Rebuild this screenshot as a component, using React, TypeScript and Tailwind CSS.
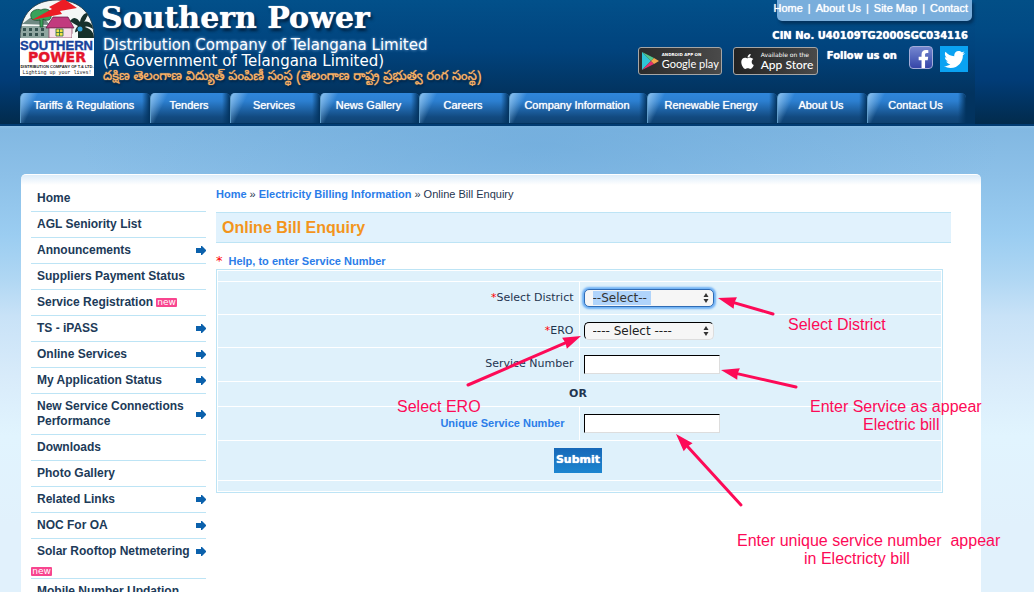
import React from "react";
import { FaApple, FaFacebookF, FaTwitter } from "react-icons/fa";

const tabs = [
  "Tariffs & Regulations",
  "Tenders",
  "Services",
  "News Gallery",
  "Careers",
  "Company Information",
  "Renewable Energy",
  "About Us",
  "Contact Us",
];

type Item = { label: string; arrow?: boolean; badge?: "inline" | "below" };

const menu: Item[] = [
  { label: "Home" },
  { label: "AGL Seniority List" },
  { label: "Announcements", arrow: true },
  { label: "Suppliers Payment Status" },
  { label: "Service Registration", badge: "inline" },
  { label: "TS - iPASS", arrow: true },
  { label: "Online Services", arrow: true },
  { label: "My Application Status", arrow: true },
  { label: "New Service Connections Performance", arrow: true },
  { label: "Downloads" },
  { label: "Photo Gallery" },
  { label: "Related Links", arrow: true },
  { label: "NOC For OA", arrow: true },
  { label: "Solar Rooftop Netmetering", arrow: true, badge: "below" },
  { label: "Mobile Number Updation" },
];

function Logo() {
  return (
    <svg className="shrink-0" width="75" height="76" viewBox="0 0 75 76" role="img" aria-label="Southern Power">
      <defs>
        <clipPath id="dome">
          <path d="M0 38 C0 14 14 0 37 0 C60 0 74 14 74 38 Z" />
        </clipPath>
      </defs>
      <g clipPath="url(#dome)">
        <rect width="75" height="38" fill="#f4f7f6" />
        <path d="M0 26 H30 V38 H0 Z" fill="#8fa6a0" />
        <path d="M2 24 L10 18 H24 L30 25 Z" fill="#6f8983" />
        <path d="M3 28h3v3h-3z M9 28h3v3h-3z M15 28h3v3h-3z M21 28h3v3h-3z M3 33h3v3h-3z M9 33h3v3h-3z M15 33h3v3h-3z M21 33h3v3h-3z" fill="#35524f" />
        <path d="M11 17 C9 11 17 8 21 10 C26 7 34 11 31 17 C31 21 25 21 23 19 V27 H20 V20 C16 21 11 20 11 17 Z" fill="#3aa35a" stroke="#17452a" strokeWidth="0.7" />
        <path d="M26 28 L33 17 H48 L54 28 Z" fill="#c23a7e" stroke="#5b1b3c" strokeWidth="0.7" />
        <rect x="29" y="28" width="23" height="10" fill="#f7dfe9" stroke="#7e3658" strokeWidth="0.7" />
        <path d="M36 29h7v7h-7z" fill="#f3e34a" stroke="#2b6d45" strokeWidth="0.8" />
        <path d="M39.500 29v7 M36 32.500h7" stroke="#2b6d45" strokeWidth="0.8" />
        <path d="M50 21 C54 15 58 19 60 22 C61 16 66 11 69 14 C66 17 66 20 64 22 C69 20 73 25 73 29 C70 27 67 26 65 27 C72 29 74 34 74 38 H56 C54 34 55 28 58 26 C55 24 52 23 50 21 Z" fill="#17312c" />
        <circle cx="60" cy="29" r="2.500" fill="#35a3dc" />
        <path d="M52 34 l6 -3 v7 h-6 z" fill="#f5f9f7" />
      </g>
      <path d="M0 38 C0 14 14 0 37 0 C60 0 74 14 74 38" fill="none" stroke="#20343b" strokeWidth="0.8" />
      <path d="M44 -1 L57 8 L40 11 L42 14 L12 20 L32 9 L29 7 Z" fill="#ec1c24" />
      <rect y="38" width="74" height="38" fill="#fff" />
      <text x="0" y="50" fontFamily="Liberation Sans, Arial, sans-serif" fontWeight="700" fontSize="13" fill="#17439b" stroke="#17439b" strokeWidth="0.4">SOUTHERN</text>
      <text x="37" y="62" textAnchor="middle" fontFamily="DejaVu Sans, Verdana, sans-serif" fontWeight="700" fontSize="14" fill="#e4152b" stroke="#e4152b" strokeWidth="0.4">POWER</text>
      <text x="37" y="68" textAnchor="middle" fontFamily="Liberation Sans, Arial, sans-serif" fontWeight="700" fontSize="4" fill="#111">DISTRIBUTION COMPANY OF T.&amp; LTD.</text>
      <text x="37" y="74" textAnchor="middle" fontFamily="Liberation Mono, monospace" fontSize="5" fill="#222">Lighting up your lives!</text>
    </svg>
  );
}

function NewBadge() {
  return (
    <span className="inline-flex h-[9px] w-[21px] items-center justify-center rounded-[1px] bg-[#f8458f] pb-px font-['DejaVu_Sans',sans-serif] text-[9px] leading-[9px] font-normal text-white">
      new
    </span>
  );
}

function MenuArrow() {
  return (
    <svg className="shrink-0" width="10" height="9" viewBox="0 0 10 9" aria-hidden="true">
      <path d="M0 2h5V0h1l4 4v1l-4 4h-1V7H0z" fill="#0b61ac" />
    </svg>
  );
}

function PlayBadge() {
  return (
    <a href="#play" className="flex h-[28px] w-[84px] items-center gap-[3px] rounded-[3px] border border-[#a6a6a6] bg-linear-to-r from-[#2b2b2b] to-[#4a4a4a] pl-[3px] text-white">
      <svg width="17" height="20" viewBox="0 0 17 20" aria-hidden="true">
        <path d="M0 1 L9 10 L0 19 Z" fill="#2fc3d6" />
        <path d="M0 1 L12 7 L9 10 Z" fill="#54c68a" />
        <path d="M0 19 L12 13 L9 10 Z" fill="#e6306c" />
        <path d="M12 7 L17 10 L12 13 L9 10 Z" fill="#f5a74b" />
      </svg>
      <span className="flex flex-col">
        <span className="font-['DejaVu_Sans',sans-serif] text-[4px] leading-[5px] font-bold whitespace-nowrap">ANDROID APP ON</span>
        <span className="font-['Lato',sans-serif] text-[11px] leading-[13px] whitespace-nowrap">Google play</span>
      </span>
    </a>
  );
}

function AppStoreBadge() {
  return (
    <a href="#appstore" className="flex h-[28px] w-[85px] items-center gap-[5px] rounded-[3px] border border-[#a6a6a6] bg-linear-to-r from-[#222] to-[#4a4a4a] pl-[5px] text-white">
      <FaApple size={17} className="shrink-0" />
      <span className="flex flex-col">
        <span className="font-['DejaVu_Sans',sans-serif] text-[6px] leading-[7px] whitespace-nowrap">Available on the</span>
        <span className="font-['Lato',sans-serif] text-[12px] leading-[13px] font-medium whitespace-nowrap">App Store</span>
      </span>
    </a>
  );
}

function Header() {
  return (
    <header className="border-b-2 border-[#023c72] bg-[linear-gradient(#024f87_0,#014a84_30px,#013c77_80px,#022b4c_124px)] font-['Liberation_Sans',Arial,sans-serif]">
      <div className="ml-5 max-w-[955px] bg-[linear-gradient(#02508a_0,#01437d_50px,#02335f_93px,#02335f_124px)] pr-[3px]">
        <div className="flex h-[93px] justify-between">
          <div className="flex gap-[6px]">
            <Logo />
            <div className="flex flex-col whitespace-nowrap text-white">
              <h1 className="h-[37px] font-['DejaVu_Serif',serif] text-[30px] leading-[35px] font-bold [text-shadow:0_0_1px_#fff,2px_3px_3px_#00203f]">Southern Power</h1>
              <p className="pl-[2px] font-['DejaVu_Sans',sans-serif] text-[15px] leading-[16px] [text-shadow:0_0_3px_#9cc8f5]">Distribution Company of Telangana Limited</p>
              <p className="pl-[2px] font-['DejaVu_Sans',sans-serif] text-[15px] leading-[17px]">(A Government of Telangana Limited)</p>
              <p className="pl-[2px] font-['Noto_Sans_Telugu','Noto_Sans',sans-serif] text-[13px] leading-[16px] text-[#fbb163] [text-shadow:0_0_1px_#fbb163,1px_2px_2px_#00203f]">దక్షిణ తెలంగాణ విద్యుత్ పంపిణీ సంస్థ (తెలంగాణ రాష్ట్ర ప్రభుత్వ రంగ సంస్థ)</p>
            </div>
          </div>
          <div className="flex flex-col items-end text-white">
            <nav className="flex h-[21px] w-[195px] justify-end gap-[5px] rounded-b-[5px] bg-[#79aedc] pr-1 text-[11px] leading-[16px] whitespace-nowrap shadow-[2px_3px_3px_#02335f] [text-shadow:0_0_1px_#fff]">
              <a href="#home">Home</a>
              <span>|</span>
              <a href="#about">About Us</a>
              <span>|</span>
              <a href="#map">Site Map</a>
              <span>|</span>
              <a href="#contact">Contact</a>
            </nav>
            <p className="mt-2 pr-1 font-['DejaVu_Sans',sans-serif] text-[10px] leading-[14px] font-bold [text-shadow:0_0_1px_#fff]">CIN No. U40109TG2000SGC034116</p>
            <div className="mt-[3px] flex items-start pr-1">
              <div className="mt-px flex gap-[11px]">
                <PlayBadge />
                <AppStoreBadge />
              </div>
              <span className="mr-[12px] ml-[9px] pt-[3px] font-['DejaVu_Sans',sans-serif] text-[10px] leading-[14px] font-bold whitespace-nowrap [text-shadow:0_0_1px_#fff]">Follow us on</span>
              <a href="#facebook" aria-label="Facebook" className="flex h-[23px] w-[24px] items-end justify-center rounded-[4px] border border-[#a3acd8] bg-linear-to-b from-[#7586cf] to-[#3645a8] pl-[5px]">
                <FaFacebookF size={18} />
              </a>
              <a href="#twitter" aria-label="Twitter" className="ml-[7px] flex h-[26px] w-[28px] items-center justify-center bg-[#0aa2f2]">
                <FaTwitter size={21} />
              </a>
            </div>
          </div>
        </div>
        <nav className="grid h-[31px] grid-cols-[130fr_80fr_90fr_99fr_90fr_138fr_130fr_90fr_99fr] pr-[6px] pb-px">
          {tabs.map((t) => (
            <a
              key={t}
              href="#tab"
              className="block rounded-t-[5px] border-l border-[#5f9cc9] bg-[linear-gradient(115deg,#8fc3ee_0,#8fc3ee00_16px),linear-gradient(to_left,#02335f_0,#02335f00_8px),linear-gradient(#2f86da_0,#2c7fd0_8px,#124a80_24px,#0f4373)] pr-[3px] text-center text-[11px] leading-[24px] whitespace-nowrap text-white [text-shadow:0_0_1px_#fff]"
            >
              {t}
            </a>
          ))}
        </nav>
      </div>
    </header>
  );
}

function Sidebar() {
  return (
    <aside className="w-[175px] shrink-0 text-[12px] leading-[15px] font-bold text-[#203a58]">
      <ul>
        {menu.map((m) => (
          <li key={m.label} className="border-b border-[#bde4f5]">
            <a href="#menu" className="block pt-[5px]">
              <span className={m.badge === "below" ? "flex items-center justify-between" : "flex items-center justify-between pb-[5px]"}>
                <span className={m.badge === "inline" ? "flex items-center gap-[3px] pl-[6px]" : "pl-[6px]"}>
                  {m.label}
                  {m.badge === "inline" && <NewBadge />}
                </span>
                {m.arrow && <MenuArrow />}
              </span>
              {m.badge === "below" && (
                <span className="flex pt-2 pb-[2px]">
                  <NewBadge />
                </span>
              )}
            </a>
          </li>
        ))}
      </ul>
    </aside>
  );
}

function Chevrons() {
  return (
    <svg className="pointer-events-none absolute top-[4px] right-[5px]" width="6" height="10" viewBox="0 0 6 10" aria-hidden="true">
      <path d="M3 0l2.500 4h-5z M3 10l2.500-4h-5z" fill="#333" />
    </svg>
  );
}

const labelCell = "border-r border-b border-white pr-[5px] text-right";
const fieldCell = "border-b border-white pl-1";
const textBox =
  "block h-[19px] w-[136px] border-t border-r border-b border-l border-t-black border-r-[#ddd] border-b-[#ddd] border-l-black bg-white px-1 outline-none";

function EnquiryForm() {
  return (
    <form className="mr-2 border border-[#bde4f5] p-px font-['DejaVu_Sans',sans-serif] text-[11px] text-[#1f3550]">
      <table className="w-full table-fixed border-separate border-spacing-0 bg-[#dff1fb]">
        <tbody>
          <tr className="h-[11px]">
            <td className="w-1/2 border-b border-white" />
            <td className="w-1/2 border-b border-white" />
          </tr>
          <tr className="h-[33px]">
            <td className={labelCell}>
              <label htmlFor="district"><span className="text-[#f00]">*</span>Select District</label>
            </td>
            <td className={fieldCell}>
              <div className="relative w-[130px]">
                <select id="district" className="block h-[18px] w-full appearance-none rounded-[5px] border border-[#2f6cb5] bg-[#f6f6f6] bg-[linear-gradient(#b0d4fb,#b0d4fb)] bg-[length:58px_14px] bg-[position:8px_1px] bg-no-repeat pl-2 text-[12px] leading-[16px] text-[#333] shadow-[0_0_2px_2px_#6fb1f5] outline-none">
                  <option>--Select--</option>
                </select>
                <Chevrons />
              </div>
            </td>
          </tr>
          <tr className="h-[33px]">
            <td className={labelCell}>
              <label htmlFor="ero"><span className="text-[#f00]">*</span>ERO</label>
            </td>
            <td className={fieldCell}>
              <div className="relative w-[130px]">
                <select id="ero" className="block h-[18px] w-full appearance-none rounded-[5px] border border-t-black border-r-[#ddd] border-b-[#ddd] border-l-black bg-[#f6f6f6] pl-2 text-[12px] leading-[16px] text-[#222] outline-none">
                  <option>---- Select ----</option>
                </select>
                <Chevrons />
              </div>
            </td>
          </tr>
          <tr className="h-[34px]">
            <td className={labelCell}><label htmlFor="service">Service Number</label></td>
            <td className={fieldCell}><input id="service" type="text" className={textBox} /></td>
          </tr>
          <tr className="h-[25px]">
            <td colSpan={2} className="border-b border-white pr-[3px] text-center font-bold">OR</td>
          </tr>
          <tr className="h-[34px]">
            <td className="border-r border-b border-white pr-[14px] text-right font-['Liberation_Sans',Arial,sans-serif] font-bold text-[#2b7de9]">
              <label htmlFor="unique">Unique Service Number</label>
            </td>
            <td className={fieldCell}><input id="unique" type="text" className={textBox} /></td>
          </tr>
          <tr className="h-[40px]">
            <td colSpan={2} className="border-b border-white pr-[3px] text-center">
              <button type="button" className="h-[25px] w-[48px] bg-linear-to-b from-[#1668b8] to-[#1d86d0] text-[11px] font-bold text-white [text-shadow:0_0_1px_#fff]">Submit</button>
            </td>
          </tr>
          <tr className="h-[10px]"><td colSpan={2} /></tr>
        </tbody>
      </table>
    </form>
  );
}

const arrows = [
  { tip: [718, 298], tail: [773, 314] },
  { tip: [581, 336], tail: [468, 385] },
  { tip: [721, 370], tail: [796, 387] },
  { tip: [676, 434], tail: [741, 505] },
];

const note = "absolute text-center text-[16px] leading-[18px] whitespace-pre text-[#fd0a57]";

function Annotations() {
  return (
    <div className="pointer-events-none absolute top-0 left-0 font-['Liberation_Sans',Helvetica,sans-serif]">
      <svg width="1034" height="592" viewBox="0 0 1034 592" aria-hidden="true">
        {arrows.map(({ tip, tail }) => {
          const dx = tail[0] - tip[0];
          const dy = tail[1] - tip[1];
          const angle = (Math.atan2(dy, dx) * 180) / Math.PI;
          return (
            <g key={tip.join()} transform={`translate(${tip[0]} ${tip[1]}) rotate(${angle})`} fill="#fd0a57">
              <line x1="12" x2={Math.hypot(dx, dy)} stroke="#fd0a57" strokeWidth="3" strokeLinecap="round" />
              <path d="M0 0 L18 -6 L17 0 L18 6 Z" />
            </g>
          );
        })}
      </svg>
      <p className={`${note} top-[316px] left-[788px]`}>Select District</p>
      <p className={`${note} top-[398px] left-[397px]`}>Select ERO</p>
      <p className={`${note} top-[398px] left-[810px]`}>{"Enter Service as appear"}</p>
      <p className={`${note} top-[416px] left-[863px]`}>{"Electric bill"}</p>
      <p className={`${note} top-[532px] left-[737px]`}>{"Enter unique service number  appear"}</p>
      <p className={`${note} top-[550px] left-[804px]`}>{"in Electricty bill"}</p>
    </div>
  );
}

export default function App() {
  return (
    <div className="relative flex h-screen flex-col overflow-hidden bg-[#e1f1fc] font-['Liberation_Sans',Arial,sans-serif]">
      <Header />
      <div className="flex-1 bg-[radial-gradient(ellipse_460px_140px_at_540px_20px,#6aa8da99,#6aa8da00),linear-gradient(#8dc0e6_0,#82b8e2_3px,#8cc0e8_50px,#9bcdf1_110px,#aed6f3_150px,#c8e2f7_190px,#d8ebfa_250px,#e1f4fe_310px,#e1f1fc_400px)] pt-12">
        <div className="ml-[21px] flex max-w-[960px] rounded-t-[5px] border-t border-white bg-[linear-gradient(#dcecf9_0,#fff_10px)] pt-[11px] pl-[10px]">
          <Sidebar />
          <main className="ml-[10px] flex-1 pr-[30px] pb-[120px] text-[11px] text-[#1f3550]">
            <nav className="flex h-[26px] items-start gap-[3px] leading-[16px]">
              <a href="#home" className="font-bold text-[#2b7de9]">Home</a>
              <span>»</span>
              <a href="#billing" className="font-bold text-[#2b7de9]">Electricity Billing Information</a>
              <span>»</span>
              <span>Online Bill Enquiry</span>
            </nav>
            <h2 className="border-y border-[#bde4f5] bg-[#e1f2fd] pl-[6px] text-[16px] leading-[29px] font-bold text-[#f3951c]">Online Bill Enquiry</h2>
            <p className="flex items-center gap-[6px] pt-[10px] leading-[16px] font-bold">
              <span className="font-['DejaVu_Sans',sans-serif] text-[13px] font-normal text-[#f00]">*</span>
              <a href="#help" className="text-[#2b7de9]">Help, to enter Service Number</a>
            </p>
            <EnquiryForm />
          </main>
        </div>
      </div>
      <Annotations />
    </div>
  );
}
